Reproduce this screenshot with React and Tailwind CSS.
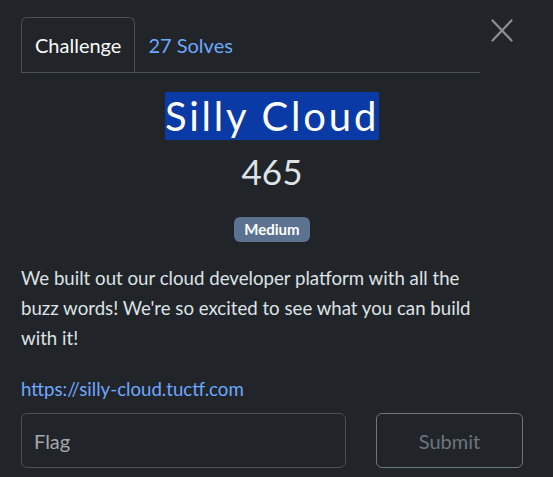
import React from "react";

export default function App() {
  return (
    <div className="w-[553px] h-[477px] bg-[#212529] text-[#dee2e6] overflow-hidden" style={{ fontFamily: "Lato, 'Noto Sans', sans-serif" }}>
      <div className="flex items-start pt-[17px] pl-[21px] pr-[30px]">
        <div className="flex w-[459px] border-b border-[#495057]">
          <div className="h-[55px] -mb-px px-[13px] flex items-center border border-b-0 border-[#495057] rounded-t-[6px] bg-[#212529] text-[20px] text-[#f8f9fa]">
            Challenge
          </div>
          <div className="h-[55px] px-[13px] flex items-center text-[20px] text-[#6ea8fe]">
            27 Solves
          </div>
        </div>
        <button className="ml-[11px] mt-[2px] w-[22px] h-[22px] flex items-center justify-center">
          <svg width="22" height="23" viewBox="0 0 22 23" fill="none" stroke="#8c8f93" strokeWidth="2.2" strokeLinecap="round">
            <path d="M1.5 1.5 L20.5 21.5 M20.5 1.5 L1.5 21.5" />
          </svg>
        </button>
      </div>
      <div className="pl-[21px] pr-[30px]">
        <div className="mt-[19px] text-center leading-[48px] text-[40px] tracking-[2.8px]">
          <span className="bg-[#0a3aa6] text-white">Silly Cloud</span>
        </div>
        <div className="mt-[10px] text-center text-[35px] leading-[42px] text-[#dee2e6]">465</div>
        <div className="mt-[25px] flex justify-center">
          <span className="h-[25px] px-[10px] rounded-[6px] bg-[#5b7290] text-white text-[15px] font-bold flex items-center">Medium</span>
        </div>
        <p className="mt-[21px] w-[459px] text-[18.667px] leading-[30px] text-[#dee2e6]">
          We built out our cloud developer platform with all the buzz words! We're so excited to see what you can build with it!
        </p>
        <div className="mt-[22px] text-[18.667px] leading-[28px] text-[#6ea8fe]">https://silly-cloud.tuctf.com</div>
        <div className="mt-[10px] flex justify-between">
          <div className="w-[325px] h-[55px] border border-[#495057] rounded-[6px] flex items-center px-[12px] text-[20px] text-[#a3a8ad]">
            Flag
          </div>
          <div className="w-[147px] h-[55px] border border-[#6c757d] rounded-[6px] flex items-center justify-center text-[20px] text-[#6c757d]">
            Submit
          </div>
        </div>
      </div>
    </div>
  );
}
